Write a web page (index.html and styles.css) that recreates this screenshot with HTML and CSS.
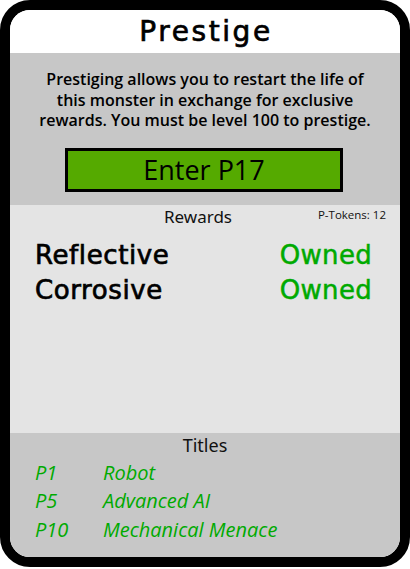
FILE: index.html
```html
<!DOCTYPE html>
<html>
<head>
<meta charset="utf-8">
<link rel="stylesheet" href="styles.css">
</head>
<body>
<div class="card">
  <div class="head"><h1 class="title">Prestige</h1></div>
  <div class="intro">
    <p class="desc">Prestiging allows you to restart the life of<br>this monster in exchange for exclusive<br>rewards. You must be level 100 to prestige.</p>
    <button class="enter">Enter P17</button>
  </div>
  <div class="rewards">
    <div class="rewards-head">
      <span></span>
      <span class="section-label">Rewards</span>
      <span class="tokens">P-Tokens: 12</span>
    </div>
    <div class="reward-list">
      <div class="reward"><span class="reward-name">Reflective</span><span class="owned">Owned</span></div>
      <div class="reward"><span class="reward-name">Corrosive</span><span class="owned">Owned</span></div>
    </div>
  </div>
  <div class="titles">
    <div class="section-label titles-label">Titles</div>
    <div class="title-list">
      <span class="tl">P1</span><span class="tl">Robot</span>
      <span class="tl">P5</span><span class="tl">Advanced AI</span>
      <span class="tl">P10</span><span class="tl">Mechanical Menace</span>
    </div>
  </div>
</div>
</body>
</html>
```

FILE: styles.css
```css
html, body {
  margin: 0;
  padding: 0;
  background: #ffffff;
}

.card {
  width: 410px;
  height: 567px;
  box-sizing: border-box;
  border: 10px solid #000;
  border-radius: 30px;
  overflow: hidden;
  display: flex;
  flex-direction: column;
  background: #fff;
}

.head {
  height: 43px;
  display: flex;
  align-items: center;
  justify-content: center;
  background: #fff;
}

.title {
  margin: 0;
  font-family: "DejaVu Sans", sans-serif;
  font-weight: normal;
  font-size: 28px;
  letter-spacing: 2.6px;
  line-height: 44px;
  color: #000;
  padding-left: 2px;
  -webkit-text-stroke: 0.7px #000;
}

.intro {
  height: 152px;
  background: #c7c7c7;
  display: flex;
  flex-direction: column;
  align-items: center;
  padding-top: 16px;
  box-sizing: border-box;
}

.desc {
  margin: 0;
  text-align: center;
  font-family: "Open Sans", sans-serif;
  font-weight: 600;
  font-size: 16px;
  line-height: 20.5px;
  color: #000;
}

.enter {
  margin-top: 17px;
  width: 278px;
  height: 44px;
  box-sizing: border-box;
  border: 3px solid #000;
  background: #55aa00;
  font-family: "Open Sans", sans-serif;
  font-size: 27px;
  color: #000;
  padding: 0;
  margin-right: 2px;
}

.rewards {
  height: 228px;
  background: #e4e4e4;
}

.rewards-head {
  display: grid;
  grid-template-columns: 1fr auto 1fr;
  padding-right: 14px;
}

.section-label {
  font-family: "Noto Sans", sans-serif;
  font-size: 17px;
  line-height: 24px;
  color: #111;
}

.tokens {
  justify-self: end;
  font-family: "Open Sans", sans-serif;
  font-size: 11.5px;
  line-height: 17px;
  color: #111;
  padding-top: 1px;
}

.reward-list {
  padding: 9px 28px 0 25px;
}

.reward {
  display: flex;
  justify-content: space-between;
  height: 35px;
  line-height: 35px;
  font-family: "DejaVu Sans", sans-serif;
  font-size: 26px;
  letter-spacing: 0.6px;
}

.reward-name {
  color: #000;
  -webkit-text-stroke: 0.7px #000;
}

.owned {
  color: #00aa00;
  letter-spacing: 0.3px;
  -webkit-text-stroke: 0.5px #00aa00;
}

.titles {
  flex: 1;
  background: #c7c7c7;
  display: flex;
  flex-direction: column;
}

.titles-label {
  text-align: center;
  font-size: 18px;
  line-height: 22px;
  padding-top: 1px;
}

.title-list {
  display: grid;
  grid-template-columns: 68px auto;
  grid-auto-rows: 28.5px;
  padding: 2px 0 0 25px;
  align-items: center;
}

.tl {
  font-family: "Open Sans", sans-serif;
  font-style: italic;
  font-size: 20px;
  color: #00aa00;
}
```
